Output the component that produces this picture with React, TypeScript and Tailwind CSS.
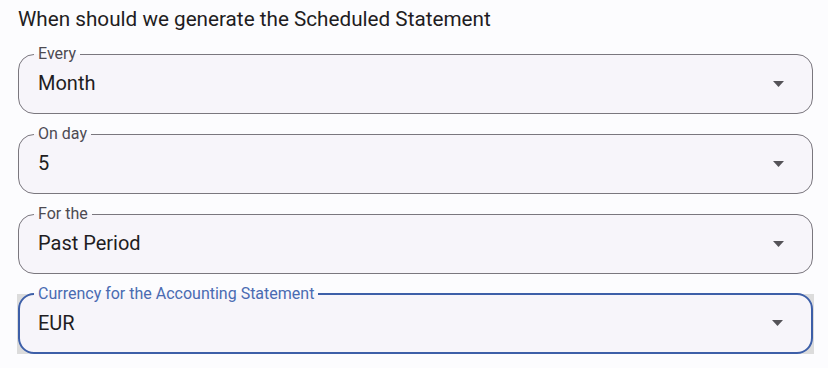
import React from 'react';

interface Field {
  label: string;
  value: string;
  focused?: boolean;
}

const fields: Field[] = [
  { label: 'Every', value: 'Month' },
  { label: 'On day', value: '5' },
  { label: 'For the', value: 'Past Period' },
  { label: 'Currency for the Accounting Statement', value: 'EUR', focused: true },
];

const SelectField: React.FC<{ field: Field }> = ({ field }) => {
  const { label, value, focused } = field;
  return (
    <div
      className={
        focused
          ? 'ml-[17px] mr-[14px] px-px bg-[linear-gradient(to_bottom,transparent_8px,#dcdcdc_8px)]'
          : 'ml-[18px] mr-[15px]'
      }
    >
      <fieldset
        className={
          'h-[68px] rounded-[16px] bg-[#f7f5fa] pl-[15px] pr-[28px] flex items-center ' +
          (focused ? 'border-2 border-[#3d5fa8]' : 'border border-[#7a777e]')
        }
      >
        <legend
          className={
            'px-1 text-[16px] leading-[16px] ' +
            (focused ? 'text-[#4a6bb2] -ml-px' : 'text-[#4d4a52]')
          }
        >
          {label}
        </legend>
        <div
          className={
            'flex-1 text-[20px] leading-6 text-[#1f1d22] -mt-[9px] ' + (focused ? 'ml-[3px]' : 'ml-1')
          }
        >
          {value}
        </div>
        <svg width="11" height="6" viewBox="0 0 11 6" className="-mt-[8px]">
          <path d="M0 0h11L5.5 6z" fill="#555358" />
        </svg>
      </fieldset>
    </div>
  );
};

const App: React.FC = () => {
  return (
    <div className="bg-white min-h-screen" style={{ fontFamily: 'Roboto, "Noto Sans", sans-serif' }}>
      <div className="bg-[#fcfcfe] pt-[7px] pb-[14px]">
        <h2 className="mx-[18px] text-[20.7px] leading-6 text-[#1f1d22] font-normal">
          When should we generate the Scheduled Statement
        </h2>
        <div className="mt-[15px] flex flex-col gap-[12px]">
          {fields.map((f) => (
            <SelectField key={f.label} field={f} />
          ))}
        </div>
      </div>
    </div>
  );
};

export default App;
